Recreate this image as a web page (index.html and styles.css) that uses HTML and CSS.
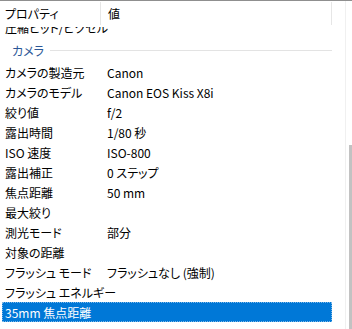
FILE: index.html
```html
<!DOCTYPE html>
<html lang="ja">
<head>
<meta charset="utf-8">
<link rel="stylesheet" href="styles.css">
</head>
<body>
<div class="view">
  <div class="main">
    <div class="header">
      <div class="hcell hname"><span>プロパティ</span></div>
      <div class="hcell hval"><span>値</span></div>
    </div>
    <div class="list">
      <div class="row clipped"><span class="name">圧縮ビット/ピクセル</span><span class="val"></span></div>
      <div class="group"><span class="gname">カメラ</span><span class="gline"></span></div>
      <div class="row"><span class="name">カメラの製造元</span><span class="val">Canon</span></div>
      <div class="row"><span class="name">カメラのモデル</span><span class="val">Canon EOS Kiss X8i</span></div>
      <div class="row"><span class="name">絞り値</span><span class="val">f/2</span></div>
      <div class="row"><span class="name">露出時間</span><span class="val">1/80 秒</span></div>
      <div class="row"><span class="name">ISO 速度</span><span class="val">ISO-800</span></div>
      <div class="row"><span class="name">露出補正</span><span class="val">0 ステップ</span></div>
      <div class="row"><span class="name">焦点距離</span><span class="val">50 mm</span></div>
      <div class="row"><span class="name">最大絞り</span><span class="val"></span></div>
      <div class="row"><span class="name">測光モード</span><span class="val">部分</span></div>
      <div class="row"><span class="name">対象の距離</span><span class="val"></span></div>
      <div class="row"><span class="name">フラッシュ モード</span><span class="val">フラッシュなし (強制)</span></div>
      <div class="row"><span class="name">フラッシュ エネルギー</span><span class="val"></span></div>
      <div class="row selected"><span class="name">35mm 焦点距離</span><span class="val"></span></div>
    </div>
  </div>
  <div class="scroll">
    <div class="track"></div>
    <div class="thumbcol"><div class="thumb"></div></div>
  </div>
</div>
</body>
</html>
```
FILE: styles.css
```css
html, body {
  margin: 0;
  padding: 0;
  background: #ffffff;
}
.view {
  width: 352px;
  height: 329px;
  border-top: 1px solid #8f8f8f;
  box-sizing: border-box;
  display: flex;
  overflow: hidden;
  font-family: "Noto Sans CJK JP", "Noto Sans", sans-serif;
  font-size: 12px;
  font-feature-settings: "palt";
  color: #000;
}
.main {
  width: 332px;
  display: flex;
  flex-direction: column;
}
.header {
  height: 26px;
  display: flex;
  flex: none;
}
.hcell {
  display: flex;
  align-items: center;
  box-sizing: border-box;
  margin: 1px 0 2px;
}
.hname {
  width: 101px;
  padding-left: 5px;
  border-right: 1px solid #e6e6e6;
}
.hval {
  flex: 1;
  padding-left: 7px;
  border-right: 1px solid #e6e6e6;
}
.list {
  flex: 1;
  overflow: hidden;
}
.row {
  height: 20px;
  display: flex;
  align-items: center;
  margin: 0 0 0 2px;
  box-sizing: border-box;
}
.row .name {
  width: 105px;
  padding-left: 3px;
  box-sizing: border-box;
  white-space: nowrap;
  flex: none;
}
.row .val {
  white-space: nowrap;
}
.clipped {
  margin-top: -10px;
}
.group {
  height: 25px;
  display: flex;
  align-items: center;
  padding-top: 1px;
  box-sizing: border-box;
}
.gname {
  padding-left: 12px;
  color: #2b5797;
}
.gline {
  flex: 1;
  height: 1px;
  background: #e3e3e3;
  margin: 0 0 0 6px;
  margin-right: -6px;
}
.selected {
  background: #0078d7;
  color: #ffffff;
  outline: 1px dotted #7fb8e6;
  outline-offset: -1px;
}
.scroll {
  width: 20px;
  display: flex;
}
.track {
  width: 13px;
  border-right: 1px solid #f0f0f0;
}
.thumbcol {
  flex: 1;
  display: flex;
  flex-direction: column;
  justify-content: flex-end;
  padding-left: 3px;
}
.thumb {
  width: 3px;
  height: 184px;
  background: #c2c2c2;
}
```
